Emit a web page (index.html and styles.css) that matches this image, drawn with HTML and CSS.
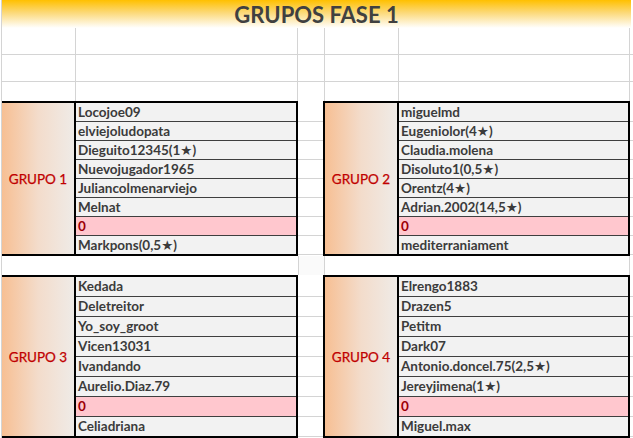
FILE: index.html
```html
<!DOCTYPE html>
<html lang="es">
<head>
<meta charset="utf-8">
<title>Grupos Fase 1</title>
<link rel="stylesheet" href="styles.css">
</head>
<body>
<div class="sheet">
  <div class="title">GRUPOS FASE 1</div>

  <div class="row row--tall"><span></span><span></span><span></span><span></span><span></span><span></span></div>
  <div class="row row--tall"><span></span><span></span><span></span><span></span><span></span><span></span></div>
  <div class="row row--short"><span></span><span></span><span></span><span></span><span></span><span></span></div>

  <div class="band">
    <section class="group group--first">
      <div class="label">GRUPO 1</div>
      <ul class="names">
        <li>Locojoe09</li>
        <li>elviejoludopata</li>
        <li>Dieguito12345(1★)</li>
        <li>Nuevojugador1965</li>
        <li>Juliancolmenarviejo</li>
        <li>Melnat</li>
        <li class="empty">0</li>
        <li>Markpons(0,5★)</li>
      </ul>
    </section>
    <div class="gutter"><span></span><span></span><span></span><span></span><span></span><span></span><span></span><span></span></div>
    <section class="group group--second">
      <div class="label">GRUPO 2</div>
      <ul class="names">
        <li>miguelmd</li>
        <li>Eugeniolor(4★)</li>
        <li>Claudia.molena</li>
        <li>Disoluto1(0,5★)</li>
        <li>Orentz(4★)</li>
        <li>Adrian.2002(14,5★)</li>
        <li class="empty">0</li>
        <li>mediterraniament</li>
      </ul>
    </section>
    <div class="gutter gutter--edge"><span></span><span></span><span></span><span></span><span></span><span></span><span></span><span></span></div>
  </div>

  <div class="spacer"><span></span><span></span><span></span><span></span></div>

  <div class="band band--loose">
    <section class="group group--first">
      <div class="label">GRUPO 3</div>
      <ul class="names">
        <li>Kedada</li>
        <li>Deletreitor</li>
        <li>Yo_soy_groot</li>
        <li>Vicen13031</li>
        <li>Ivandando</li>
        <li>Aurelio.Diaz.79</li>
        <li class="empty">0</li>
        <li>Celiadriana</li>
      </ul>
    </section>
    <div class="gutter"><span></span><span></span><span></span><span></span><span></span><span></span><span></span><span></span></div>
    <section class="group group--second">
      <div class="label">GRUPO 4</div>
      <ul class="names">
        <li>Elrengo1883</li>
        <li>Drazen5</li>
        <li>Petitm</li>
        <li>Dark07</li>
        <li>Antonio.doncel.75(2,5★)</li>
        <li>Jereyjimena(1★)</li>
        <li class="empty">0</li>
        <li>Miguel.max</li>
      </ul>
    </section>
    <div class="gutter gutter--edge"><span></span><span></span><span></span><span></span><span></span><span></span><span></span><span></span></div>
  </div>
</div>
</body>
</html>
```

FILE: styles.css
```css
* {
  box-sizing: border-box;
  margin: 0;
  padding: 0;
}

body {
  margin: 0;
  width: 633px;
  height: 438px;
  overflow: hidden;
  background: #ffffff;
  font-family: Lato, "Liberation Sans", "DejaVu Sans", sans-serif;
}

.sheet {
  margin-left: 1px;
  border-left: 1px solid #d4d4d4;
}

.title {
  width: 629px;
  height: 28px;
  background: linear-gradient(to bottom, #ffc000 0%, #fcd978 45%, #ffffff 100%);
  color: #404040;
  font-weight: bold;
  font-size: 22px;
  line-height: 29px;
  text-align: center;
}

.row {
  display: grid;
  grid-template-columns: 74px 222px 27px 74px 231px 1fr;
}

.row > span {
  border-right: 1px solid #d4d4d4;
  border-bottom: 1px solid #d4d4d4;
}

.row > span:last-child {
  border-right: 0;
}

.row--tall {
  height: 27px;
}

.row--short {
  height: 19px;
}

.row--short > span {
  border-bottom: 0;
}

.band {
  display: flex;
}

.group {
  display: flex;
  border: 2px solid #000000;
}

.group--first {
  width: 296px;
  border-left: 0;
}

.group--second {
  width: 307px;
}

.label {
  flex: none;
  width: 74px;
  border-right: 2px solid #000000;
  background: linear-gradient(to right, #f7bf93 0%, #f3dccb 50%, #efebe7 100%);
  display: flex;
  align-items: center;
  justify-content: center;
  color: #c00000;
  font-size: 13.5px;
  -webkit-text-stroke: 0.25px #c00000;
}

.names {
  flex: 1;
  list-style: none;
  min-width: 0;
}

.names li {
  height: 19px;
  line-height: 18px;
  padding-left: 2px;
  border-bottom: 1px solid #3f3f3f;
  background: #f2f2f2;
  color: #3b3b3b;
  font-weight: bold;
  font-size: 13.5px;
  white-space: nowrap;
  overflow: hidden;
}

.names li:last-child {
  height: 18px;
  border-bottom: 0;
}

.names li.empty {
  background: #ffc7ce;
  color: #9c0006;
}

.band--loose .names li {
  height: 20px;
  line-height: 19px;
}

.band--loose .names li:last-child {
  height: 19px;
}

.gutter {
  width: 25px;
  padding-top: 2px;
  display: flex;
  flex-direction: column;
}

.gutter--edge {
  flex: 1;
  width: auto;
}

.gutter > span {
  flex: none;
  height: 19px;
  border-bottom: 1px solid #d4d4d4;
}

.band--loose .gutter > span {
  height: 20px;
}

.spacer {
  display: grid;
  grid-template-columns: 297px 26px 305px 1fr;
  height: 19px;
}

.spacer > span {
  border-right: 1px solid #d4d4d4;
}

.spacer > span:nth-child(2) {
  background: #fafafa;
}

.spacer > span:last-child {
  border-right: 0;
}
```
